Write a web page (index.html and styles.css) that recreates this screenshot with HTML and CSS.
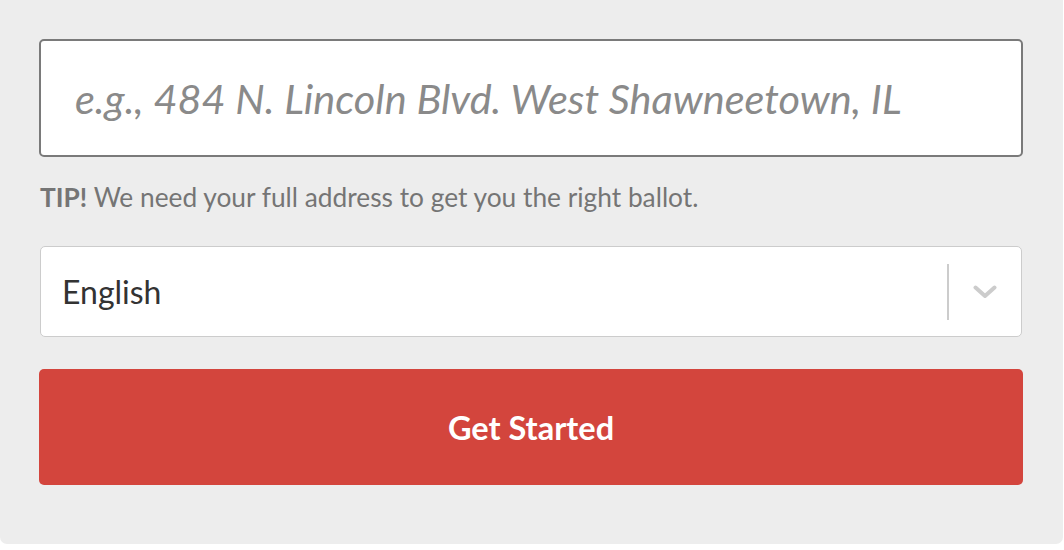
FILE: index.html
```html
<!DOCTYPE html>
<html lang="en">
<head>
  <meta charset="UTF-8" />
  <meta name="viewport" content="width=device-width, initial-scale=1.0" />
  <title>Get Started</title>
  <link rel="stylesheet" href="styles.css">
</head>
<body>
  <form class="start-card">
    <input type="text" class="address-input" placeholder="e.g., 484 N. Lincoln Blvd. West Shawneetown, IL">
    <p class="tip"><strong>TIP!</strong> We need your full address to get you the right ballot.</p>
    <div class="lang-select">
      <span class="lang-value">English</span>
      <span class="lang-separator"></span>
      <span class="lang-indicator">
        <svg width="24" height="14" viewBox="0 0 24 14">
          <path d="M2.5 2.5 L12 11 L21.5 2.5" fill="none" stroke="#cccccc" stroke-width="4" stroke-linecap="round" stroke-linejoin="round"/>
        </svg>
      </span>
    </div>
    <button type="button" class="start-btn">Get Started</button>
  </form>
</body>
</html>
```

FILE: styles.css
```css
body {
  margin: 0;
  background: #fff;
  font-family: Lato, 'Open Sans', sans-serif;
}
.start-card {
  width: 1063px;
  box-sizing: border-box;
  padding: 39px 40px 59px 39px;
  background: #ededed;
  border-radius: 0 0 7px 7px;
  display: flex;
  flex-direction: column;
}
.address-input {
  height: 118px;
  box-sizing: border-box;
  border: 2px solid #7a7a7a;
  border-radius: 5px;
  background: #fff;
  padding: 0 34px;
  font-family: inherit;
  font-size: 41.5px;
  font-style: italic;
  color: #333;
  outline: none;
}
.address-input::placeholder {
  color: #8a8a8a;
}
.tip {
  margin: 0;
  padding: 24px 1px 32px;
  font-size: 26.3px;
  line-height: 33px;
  color: #757575;
}
.tip strong {
  font-weight: 700;
}
.lang-select {
  height: 91px;
  box-sizing: border-box;
  margin: 0 1px;
  border: 1px solid #cccccc;
  border-radius: 5px;
  background: #fff;
  display: flex;
  align-items: center;
}
.lang-value {
  flex: 1;
  padding-left: 21px;
  font-size: 32px;
  color: #333;
}
.lang-separator {
  width: 2px;
  height: 56px;
  background: #cccccc;
}
.lang-indicator {
  width: 72px;
  display: flex;
  justify-content: center;
  align-items: center;
}
.start-btn {
  margin-top: 32px;
  height: 116px;
  border: none;
  border-radius: 5px;
  background: #d3453d;
  color: #fff;
  font-family: inherit;
  font-size: 32.5px;
  font-weight: 700;
  cursor: pointer;
}
```
